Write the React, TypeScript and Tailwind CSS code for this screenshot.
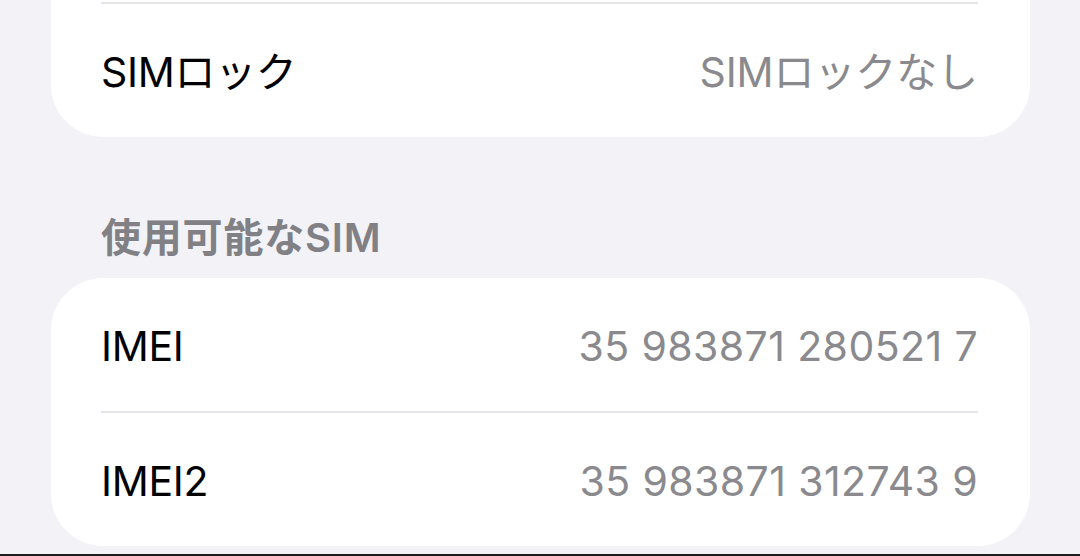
import React from 'react'

const font = { fontFamily: 'Inter, "Noto Sans CJK JP", sans-serif' }

function Row({ label, value, digits }: { label: string; value: string; digits?: boolean }) {
  return (
    <div className="flex items-center justify-between h-[133px] pt-[5px] pr-[52px]">
      <span className="text-[41px] text-black tracking-[-0.3px]">{label}</span>
      <span className={`text-[41px] text-[#8a8a8e] ${digits ? 'tracking-[0.4px]' : 'tracking-[-0.1px]'}`}>{value}</span>
    </div>
  )
}

function Divider() {
  return <div className="border-t-2 border-[#e4e4e9] mr-[52px]" />
}

export default function App() {
  return (
    <div className="h-[556px] bg-[#f2f2f7] flex flex-col overflow-hidden border-b-2 border-[#1c1c1e]" style={font}>
      <div className="mx-[51px] w-[979px]">
        {/* top card, cut off above */}
        <div className="bg-white rounded-b-[52px] pl-[50px] pt-[2px]">
          <Divider />
          <Row label="SIMロック" value="SIMロックなし" />
        </div>

        {/* section header */}
        <div className="mt-[77px] mb-[16px] pl-[50px] leading-[48px] text-[40px] font-semibold text-[#808085] tracking-[0.8px]">
          使用可能なSIM
        </div>

        <div className="bg-white rounded-[52px] pl-[50px]">
          <Row label="IMEI" value="35 983871 280521 7" digits />
          <Divider />
          <Row label="IMEI2" value="35 983871 312743 9" digits />
        </div>
      </div>
    </div>
  )
}
